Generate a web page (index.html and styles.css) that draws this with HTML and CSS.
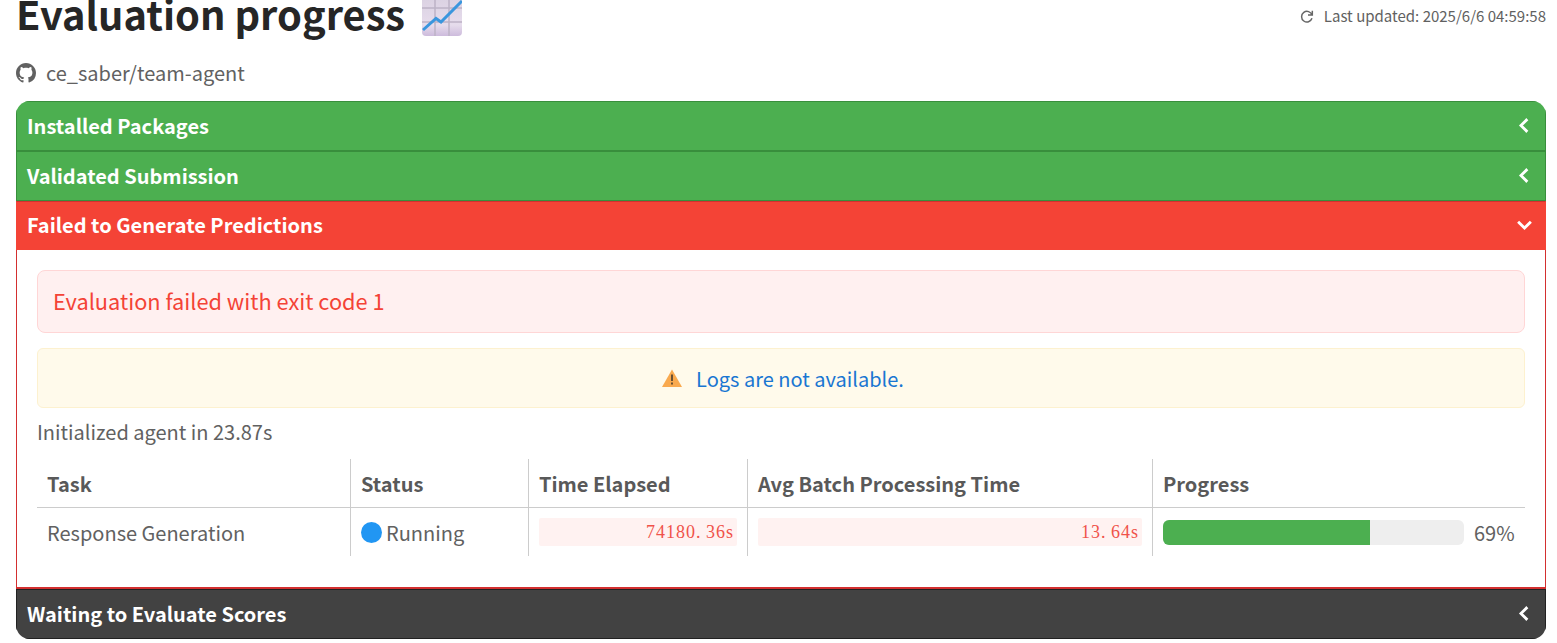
FILE: index.html
```html
<!DOCTYPE html>
<html lang="en">
<head>
<meta charset="utf-8">
<title>Evaluation progress</title>
<link rel="stylesheet" href="styles.css">
</head>
<body>
<main class="page">
  <div class="top">
    <h1 class="title">Evaluation progress
      <svg class="emoji" viewBox="0 0 40 36" aria-hidden="true">
        <defs>
          <linearGradient id="paper" x1="0" y1="0" x2="0" y2="1">
            <stop offset="0" stop-color="#d8cfe0"/><stop offset="0.75" stop-color="#e6dcec"/><stop offset="1" stop-color="#cdbbdc"/>
          </linearGradient>
        </defs>
        <rect x="0" y="-8" width="40" height="44" rx="4" fill="url(#paper)"/>
        <path d="M13 -8V36M27 -8V36M0 8H40M0 22H40" stroke="#bdb3c6" stroke-width="1.5" fill="none"/>
        <path d="M1 30L14 18.500L19 22L40 1" stroke="#3a96de" stroke-width="3" fill="none"/>
      </svg>
    </h1>
    <div class="updated">
      <svg class="refresh" viewBox="0 0 24 24" aria-hidden="true"><path d="M20 4v6.500h-6.500M19.500 10.500A8 8 0 1 0 19.500 15.500" fill="none" stroke="#666" stroke-width="2.200"/></svg>
      <span>Last updated: 2025/6/6 04:59:58</span>
    </div>
  </div>
  <div class="repo">
    <svg class="gh" viewBox="0 0 16 16" aria-hidden="true"><path fill="#616161" d="M8 0C3.580 0 0 3.580 0 8c0 3.540 2.290 6.530 5.470 7.590.4.070.55-.17.55-.38 0-.19-.01-.82-.01-1.490-2.010.37-2.530-.49-2.690-.94-.09-.23-.48-.94-.82-1.130-.28-.15-.68-.52-.01-.53.630-.01 1.080.58 1.230.82.720 1.210 1.870.87 2.330.66.070-.52.280-.87.510-1.070-1.780-.2-3.640-.89-3.640-3.950 0-.87.310-1.590.820-2.150-.08-.2-.36-1.020.08-2.120 0 0 .67-.21 2.200.82.640-.18 1.320-.27 2-.27s1.360.09 2 .27c1.530-1.040 2.200-.82 2.200-.82.440 1.100.160 1.920.08 2.120.51.560.82 1.270.82 2.150 0 3.070-1.870 3.750-3.650 3.950.29.250.54.730.54 1.480 0 1.070-.01 1.930-.01 2.200 0 .21.150.46.550.38A8.010 8.010 0 0 0 16 8c0-4.420-3.580-8-8-8z"/></svg>
    <span>ce_saber/team-agent</span>
  </div>

  <section class="accordion">
    <div class="head green">
      <span>Installed Packages</span>
      <svg class="chev" viewBox="0 0 12 12" aria-hidden="true"><path d="M8 1.500L3.500 6L8 10.500"/></svg>
    </div>
    <div class="head green">
      <span>Validated Submission</span>
      <svg class="chev" viewBox="0 0 12 12" aria-hidden="true"><path d="M8 1.500L3.500 6L8 10.500"/></svg>
    </div>
    <div class="head red">
      <span>Failed to Generate Predictions</span>
      <svg class="chev" viewBox="0 0 12 12" aria-hidden="true"><path d="M1.500 4L6 8.500L10.500 4"/></svg>
    </div>
    <div class="panel">
      <div class="alert-error">Evaluation failed with exit code 1</div>
      <div class="alert-warn">
        <svg class="warn" viewBox="0 0 20 18" aria-hidden="true">
          <path d="M10 0.500L20 18H0Z" fill="#f9a94e"/>
          <path d="M10 5.500V12M10 13.500V15.500" stroke="#5a4630" stroke-width="1.800" fill="none"/>
        </svg>
        <span>Logs are not available.</span>
      </div>
      <p class="init">Initialized agent in 23.87s</p>
      <table class="tasks">
        <colgroup>
          <col class="c1"><col class="c2"><col class="c3"><col class="c4"><col class="c5">
        </colgroup>
        <thead>
          <tr><th>Task</th><th>Status</th><th>Time Elapsed</th><th>Avg Batch Processing Time</th><th>Progress</th></tr>
        </thead>
        <tbody>
          <tr>
            <td>Response Generation</td>
            <td><span class="status"><i class="dot"></i>Running</span></td>
            <td><code class="pill">74180<span class="point">.</span>36s</code></td>
            <td><code class="pill">13<span class="point">.</span>64s</code></td>
            <td>
              <div class="progress">
                <div class="track"><div class="fill" style="width:68.800%"></div></div>
                <span>69%</span>
              </div>
            </td>
          </tr>
        </tbody>
      </table>
    </div>
    <div class="head dark">
      <span>Waiting to Evaluate Scores</span>
      <svg class="chev" viewBox="0 0 12 12" aria-hidden="true"><path d="M8 1.500L3.500 6L8 10.500"/></svg>
    </div>
  </section>
</main>
</body>
</html>
```

FILE: styles.css
```css
* { box-sizing: border-box; }
html, body { margin: 0; padding: 0; background: #fff; overflow: hidden; }
body { font-family: "Noto Sans CJK SC", "Noto Sans", sans-serif; color: #616161; }
.page { padding: 0 11px 0 16px; height: 643px; overflow: hidden; }
.top { display: flex; justify-content: space-between; align-items: flex-start; height: 50px; margin-top: -16px; }
.title { margin: 0; font-size: 39.800px; line-height: 58px; font-weight: 700; color: #262626; white-space: nowrap; display: flex; align-items: center; gap: 17px; }
.emoji { width: 40px; height: 36px; margin-top: 10px; flex: none; overflow: hidden; }
.updated { display: flex; align-items: center; gap: 9px; font-size: 15px; line-height: 20px; margin-top: 22px; color: #616161; }
.refresh { width: 16px; height: 16px; }
.repo { display: flex; align-items: center; gap: 10px; height: 24px; margin-top: 27px; font-size: 20px; line-height: 24px; color: #616161; }
.gh { width: 20px; height: 20px; }
.accordion { margin-top: 16px; border-radius: 14px; overflow: hidden; }
.head { display: flex; justify-content: space-between; align-items: center; height: 50px; padding: 0 12px 2px 10px; color: #fff; font-size: 20px; font-weight: 700; border: 1px solid transparent; }
.green { background: #4caf50; border-color: #388e3c; }
.red { background: #f44336; border-color: #f44336; border-top-color: #d32f2f; height: 49px; }
.dark { background: #424242; border-color: #212121; }
.chev { width: 17px; height: 17px; }
.chev path { fill: none; stroke: #fff; stroke-width: 2; }
.panel { height: 339px; padding: 20px 20px 0; background: #fff; border: 1px solid #d32f2f; border-top: 0; border-bottom-width: 2px; }
.alert-error { height: 63px; padding: 0 15px 2px; display: flex; align-items: center; background: #fff0f0; border: 1px solid #ffd6d6; border-radius: 8px; color: #f44336; font-size: 21.750px; }
.alert-warn { height: 60px; margin-top: 15px; padding-left: 4px; display: flex; align-items: center; justify-content: center; gap: 14px; background: #fffaeb; border: 1px solid #fdf1cf; border-radius: 6px; color: #1976d2; font-size: 20px; }
.warn { width: 20px; height: 18px; }
.init { margin: 11px 0 0; height: 25px; font-size: 20px; line-height: 25px; color: #616161; }
.tasks { width: 1488px; margin-top: 15px; border-collapse: separate; border-spacing: 0; table-layout: fixed; font-size: 20px; color: #616161; }
.c1 { width: 314px; }
.c2 { width: 178px; }
.c3 { width: 219px; }
.c4 { width: 405px; }
.c5 { width: 372px; }
.tasks th { height: 49px; padding: 0 10px; text-align: left; font-weight: 700; border-right: 1px solid #ccc; border-bottom: 1px solid #ccc; color: #595959; }
.tasks td { height: 48px; padding: 0 10px; border-right: 1px solid #ccc; }
.tasks th:last-child, .tasks td:last-child { border-right: 0; }
.status { display: flex; align-items: center; gap: 4px; }
.dot { width: 21px; height: 21px; border-radius: 50%; background: #2196f3; flex: none; }
.pill { display: block; height: 28px; line-height: 28px; padding: 0 3px 0 5px; text-align: right; background: #fff2f1; border-radius: 2px; color: #f0524a; font-family: "Liberation Serif", serif; font-size: 18px; letter-spacing: 1px; }
.point { letter-spacing: 5.500px; }
.progress { display: flex; align-items: center; gap: 10px; }
.track { flex: none; width: 301px; height: 25px; background: #eee; border-radius: 6px; overflow: hidden; }
.fill { height: 100%; background: #4caf50; }
```
